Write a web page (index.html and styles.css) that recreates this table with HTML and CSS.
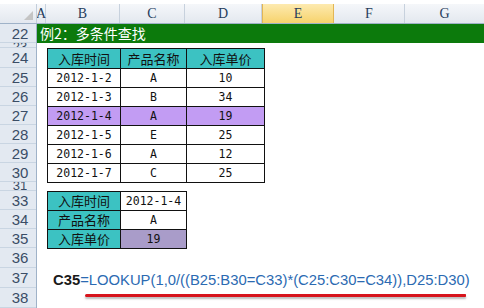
FILE: index.html
```html
<!DOCTYPE html>
<html>
<head>
<meta charset="utf-8">
<link rel="stylesheet" href="styles.css">
</head>
<body>
<div class="sheet">
  <div class="colhdr-row">
    <div class="corner"><span class="tri"></span></div>
    <div class="ch w-a">A</div>
    <div class="ch w-b">B</div>
    <div class="ch w-c">C</div>
    <div class="ch w-d">D</div>
    <div class="ch w-e sel">E</div>
    <div class="ch w-f">F</div>
    <div class="ch w-g">G</div>
  </div>
  <div class="body">
    <div class="rowhdrs">
      <div class="rh">22</div>
      <div class="rh h5"><span class="cut">23</span></div>
      <div class="rh h20">24</div>
      <div class="rh">25</div>
      <div class="rh">26</div>
      <div class="rh">27</div>
      <div class="rh">28</div>
      <div class="rh">29</div>
      <div class="rh">30</div>
      <div class="rh h9"><span class="cut">31</span></div>
      <div class="rh">33</div>
      <div class="rh">34</div>
      <div class="rh">35</div>
      <div class="rh h20">36</div>
      <div class="rh h20">37</div>
      <div class="rh h20">38</div>
    </div>
    <div class="cells">
      <div class="title">例2：多条件查找</div>
      <table class="grid t1">
        <tr class="hd"><td class="cb">入库时间</td><td class="cc">产品名称</td><td class="cd">入库单价</td></tr>
        <tr><td class="num">2012-1-2</td><td class="num">A</td><td class="num">10</td></tr>
        <tr><td class="num">2012-1-3</td><td class="num">B</td><td class="num">34</td></tr>
        <tr class="hl"><td class="num">2012-1-4</td><td class="num">A</td><td class="num">19</td></tr>
        <tr><td class="num">2012-1-5</td><td class="num">E</td><td class="num">25</td></tr>
        <tr><td class="num">2012-1-6</td><td class="num">A</td><td class="num">12</td></tr>
        <tr><td class="num">2012-1-7</td><td class="num">C</td><td class="num">25</td></tr>
      </table>
      <table class="grid t2">
        <tr><td class="lbl cb">入库时间</td><td class="num cc">2012-1-4</td></tr>
        <tr><td class="lbl">产品名称</td><td class="num">A</td></tr>
        <tr><td class="lbl">入库单价</td><td class="num res">19</td></tr>
      </table>
      <div class="formula-area">
        <div class="formula"><span class="ref">C35</span><span class="fx">=LOOKUP(1,0/((B25:B30=C33)*(C25:C30=C34)),D25:D30)</span></div>
        <div class="redline"></div>
      </div>
    </div>
  </div>
</div>
</body>
</html>
```

FILE: styles.css
```css
html, body {
  margin: 0;
  padding: 0;
  background: #ffffff;
}
.sheet {
  width: 484px;
  height: 308px;
  overflow: hidden;
  padding-top: 4px;
  box-sizing: border-box;
  background: #ffffff;
}
.colhdr-row {
  display: flex;
  height: 20px;
  background: linear-gradient(#f5f7fa, #e3e8ef);
  border-bottom: 1px solid #9fb2c8;
  box-sizing: border-box;
}
.corner {
  width: 37px;
  position: relative;
  border-right: 1px solid #c3cedb;
  box-sizing: border-box;
}
.tri {
  position: absolute;
  right: 3px;
  bottom: 3px;
  width: 0;
  height: 0;
  border-left: 9px solid transparent;
  border-bottom: 9px solid #c4c4c4;
}
.ch {
  display: flex;
  align-items: center;
  justify-content: center;
  font-family: "Liberation Serif", "DejaVu Serif", serif;
  font-size: 14px;
  color: #263d5c;
  border-right: 1px solid #c7d1dd;
  box-sizing: border-box;
}
.w-a { width: 9px; }
.w-b { width: 74px; }
.w-c { width: 65px; }
.w-d { width: 77px; }
.w-e { width: 72px; }
.w-f { width: 71px; }
.w-g { flex: 1; border-right: 0; }
.ch.sel {
  background: linear-gradient(#fdeab0, #f7d36c);
  border-left: 1px solid #e2b655;
  border-right: 1px solid #e2b655;
}
.body {
  display: flex;
}
.rowhdrs {
  width: 37px;
  display: flex;
  flex-direction: column;
  background: #e3e9f1;
  border-right: 1px solid #9fb2c8;
  box-sizing: border-box;
}
.rh {
  height: 19px;
  display: flex;
  align-items: center;
  justify-content: center;
  overflow: hidden;
  font-family: "Liberation Sans", Arial, sans-serif;
  font-size: 15px;
  color: #3a4d66;
  border-bottom: 1px solid #c9d5e2;
  box-sizing: border-box;
  padding-left: 4px;
}
.rh.h5 { height: 5px; }
.rh.h9 { height: 9px; }
.rh.h20 { height: 20px; }
.rh .cut {
  display: block;
  height: 100%;
  line-height: 8px;
  font-size: 13px;
  overflow: hidden;
}
.cells {
  flex: 1;
  display: flex;
  flex-direction: column;
}
.title {
  height: 19px;
  background: #0c7a0c;
  color: #ffffff;
  font-family: "Noto Sans CJK SC", sans-serif;
  font-size: 14px;
  line-height: 19px;
  padding-left: 3px;
  margin-bottom: 5px;
}
.grid {
  border-collapse: collapse;
  margin-left: 10px;
  table-layout: fixed;
}
.grid td {
  border: 1px solid #111111;
  padding: 0;
  height: 18px;
  text-align: center;
  font-family: "Noto Sans CJK SC", sans-serif;
  font-size: 13px;
  line-height: 18px;
  color: #111111;
  background: #ffffff;
  white-space: nowrap;
}
.grid td.num {
  font-family: "DejaVu Sans Mono", "Liberation Mono", monospace;
  font-size: 11.5px;
}
.t1 { width: 215px; }
.t1 .cb { width: 72px; }
.t1 .cc { width: 65px; }
.t1 .cd { width: 77px; }
.t1 tr.hd td {
  background: #3cc2c2;
  height: 19px;
}
.t1 tr.hl td {
  background: #c29cf3;
}
.t2 {
  width: 138px;
  margin-top: 8px;
}
.t2 .cb { width: 72px; }
.t2 .cc { width: 65px; }
.t2 td.lbl {
  background: #3cc2c2;
}
.t2 td.res {
  background: #a99cc9;
}
.formula-area {
  padding-top: 22px;
  padding-left: 16px;
}
.formula {
  height: 18px;
  font-family: "Liberation Sans", Arial, sans-serif;
  font-size: 14.8px;
  line-height: 18px;
  white-space: nowrap;
}
.ref {
  color: #1a1a1a;
  font-weight: bold;
}
.fx {
  color: #2b6ab2;
}
.redline {
  margin-top: 5px;
  margin-left: 32px;
  width: 381px;
  height: 3px;
  background: #d7141c;
  border-radius: 2px 1px 1px 2px;
  box-shadow: 0 2px 2px rgba(60, 60, 60, 0.35);
}
```
